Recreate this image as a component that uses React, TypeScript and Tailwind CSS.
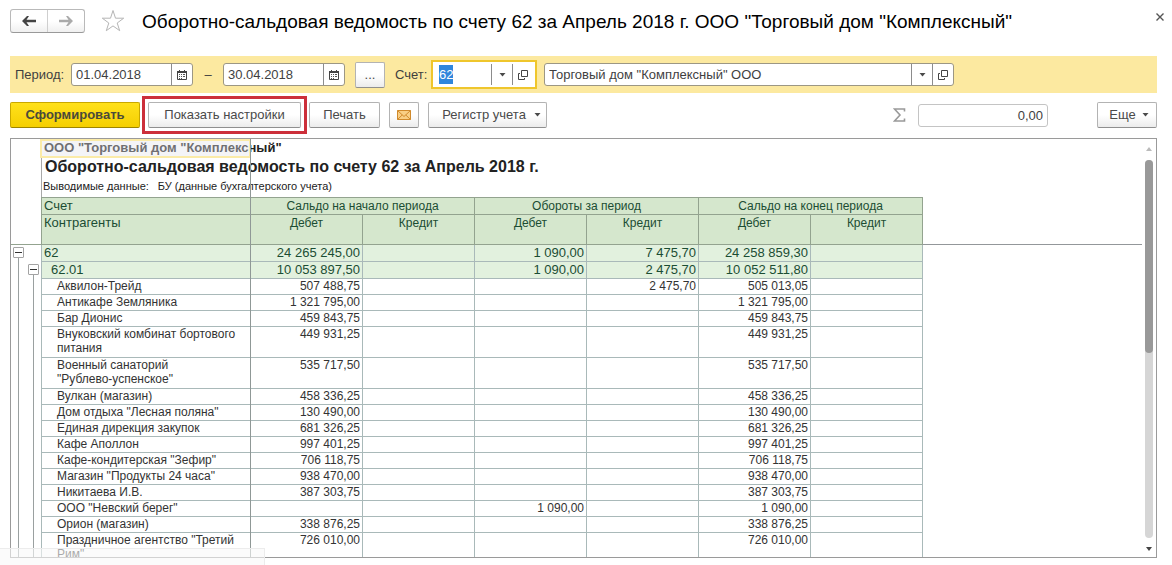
import { useEffect, useRef } from "react";
import type { ReactNode } from "react";

type Row = { name: string; open?: string; debit?: string; credit?: string; close?: string; level?: number };

const rows: Row[] = [
  { name: "62", open: "24 265 245,00", debit: "1 090,00", credit: "7 475,70", close: "24 258 859,30", level: 1 },
  { name: "62.01", open: "10 053 897,50", debit: "1 090,00", credit: "2 475,70", close: "10 052 511,80", level: 2 },
  { name: "Аквилон-Трейд", open: "507 488,75", credit: "2 475,70", close: "505 013,05" },
  { name: "Антикафе Земляника", open: "1 321 795,00", close: "1 321 795,00" },
  { name: "Бар Дионис", open: "459 843,75", close: "459 843,75" },
  { name: "Внуковский комбинат бортового питания", open: "449 931,25", close: "449 931,25" },
  { name: "Военный санаторий\n\"Рублево-успенское\"", open: "535 717,50", close: "535 717,50" },
  { name: "Вулкан (магазин)", open: "458 336,25", close: "458 336,25" },
  { name: "Дом отдыха \"Лесная поляна\"", open: "130 490,00", close: "130 490,00" },
  { name: "Единая дирекция закупок", open: "681 326,25", close: "681 326,25" },
  { name: "Кафе Аполлон", open: "997 401,25", close: "997 401,25" },
  { name: "Кафе-кондитерская \"Зефир\"", open: "706 118,75", close: "706 118,75" },
  { name: "Магазин \"Продукты 24 часа\"", open: "938 470,00", close: "938 470,00" },
  { name: "Никитаева И.В.", open: "387 303,75", close: "387 303,75" },
  { name: "ООО \"Невский берег\"", debit: "1 090,00", close: "1 090,00" },
  { name: "Орион (магазин)", open: "338 876,25", close: "338 876,25" },
  { name: "Праздничное агентство \"Третий Рим\"", open: "726 010,00", close: "726 010,00" },
];

const buttonBase =
  "flex h-[26px] items-center justify-center rounded-[2px] border border-[#b3b3b3] border-b-[#8f8f8f] bg-linear-to-b from-white from-50% to-[#ececec] text-[#4a4a4a] whitespace-nowrap";

function Caret() {
  return (
    <svg width="7" height="4" viewBox="0 0 7 4" aria-hidden="true">
      <path d="M0.5 0h6L3.5 3.6z" fill="#4a4a4a" />
    </svg>
  );
}

function OpenIcon() {
  return (
    <svg width="10" height="10" viewBox="0 0 10 10" fill="none" stroke="#444" aria-hidden="true">
      <path d="M3.5 0.5h6v6h-6zM2 3.5H0.5v6h6V8" />
    </svg>
  );
}

function CalendarIcon() {
  return (
    <svg width="10" height="10" viewBox="0 0 10 10" aria-hidden="true">
      <path d="M0.5 1.5h9v8h-9z" fill="none" stroke="#444" />
      <path d="M0 1h10v2H0zM2 0h1v2H2zM7 0h1v2H7z" fill="#444" />
      <path d="M2 4h1v1H2zM4 4h1v1H4zM6 4h2v1H6zM2 6h1v1H2zM4 6h1v1H4zM6 6h2v1H6zM2 8h1v1H2zM4 8h1v1H4z" fill="#555" />
    </svg>
  );
}

function FieldButton({ label, children }: { label: string; children: ReactNode }) {
  return (
    <button type="button" aria-label={label} className="flex w-[21px] shrink-0 items-center justify-center border-l border-[#8c8c8c]">
      {children}
    </button>
  );
}

function DateField({ label, value }: { label: string; value: string }) {
  return (
    <div className="flex h-[23px] w-[122px] shrink-0 overflow-hidden rounded-[3px] border border-[#9c9784] bg-white">
      <input aria-label={label} defaultValue={value} className="min-w-0 flex-1 bg-transparent pl-1 outline-none" />
      <FieldButton label={`${label}: календарь`}>
        <CalendarIcon />
      </FieldButton>
    </div>
  );
}

function AccountField() {
  const ref = useRef<HTMLInputElement>(null);
  useEffect(() => {
    ref.current?.focus();
    ref.current?.select();
  }, []);
  return (
    <div className="flex h-[29px] w-[106px] shrink-0 border-2 border-[#efc62c] bg-white p-[2px]">
      <input
        id="account"
        ref={ref}
        defaultValue="62"
        className="min-w-0 flex-1 bg-transparent pl-[4px] outline-none selection:bg-[#2f86dc] selection:text-white"
      />
      <FieldButton label="Выбрать счет">
        <Caret />
      </FieldButton>
      <FieldButton label="Открыть счет">
        <OpenIcon />
      </FieldButton>
    </div>
  );
}

function TreeCell({ level }: { level?: number }) {
  return (
    <td className="relative border-r border-[#a9b9b9] p-0">
      <span className={`absolute bottom-0 left-[7px] w-px bg-[#9aa0a0] ${level === 1 ? "top-3" : "top-0"}`} />
      {level !== 1 && <span className={`absolute bottom-0 left-[22px] w-px bg-[#9aa0a0] ${level === 2 ? "top-3" : "top-0"}`} />}
      {level && (
        <button
          type="button"
          aria-label="Свернуть группу"
          className={`absolute top-[2px] flex size-[11px] items-center justify-center rounded-[1px] border border-[#a3a3a3] bg-white ${
            level === 1 ? "left-[2px]" : "left-[17px]"
          }`}
        >
          <span className="h-px w-[7px] bg-[#333]" />
        </button>
      )}
    </td>
  );
}

function ReportTable() {
  const head = "border-b border-r border-[#93a38f] bg-[#d5e7cd] px-[2px] py-0 align-top font-normal leading-4";
  return (
    <table className="w-full table-fixed border-separate border-spacing-0 text-xs text-[#333]">
      <colgroup>
        <col className="w-[31px]" />
        <col className="w-[209px]" />
        <col className="w-[112px]" />
        <col className="w-[112px]" />
        <col className="w-[112px]" />
        <col className="w-[112px]" />
        <col className="w-[112px]" />
        <col className="w-[112px]" />
        <col />
      </colgroup>
      <thead className="text-[#1b4d33]">
        <tr className="h-[18px]">
          <td className="border-r border-[#93a38f] p-0" />
          <th scope="col" className={`${head} border-t text-left text-[13px]`}>Счет</th>
          <th scope="colgroup" colSpan={2} className={`${head} border-t`}>Сальдо на начало периода</th>
          <th scope="colgroup" colSpan={2} className={`${head} border-t`}>Обороты за период</th>
          <th scope="colgroup" colSpan={2} className={`${head} border-t`}>Сальдо на конец периода</th>
          <td className="p-0" />
        </tr>
        <tr className="h-[30px]">
          <td className="border-r border-b border-[#93a38f] p-0" />
          <th scope="col" className={`${head} text-left text-[13px]`}>Контрагенты</th>
          {["Дебет", "Кредит", "Дебет", "Кредит", "Дебет", "Кредит"].map((t, i) => (
            <th scope="col" key={i} className={head}>{t}</th>
          ))}
          <td className="border-b border-[#93979a] p-0" />
        </tr>
      </thead>
      <tbody>
        {rows.map((r) => {
          const cell = `border-b border-r border-[#a9b9b9] py-0 align-top ${r.level ? "bg-[#e2f1de] text-[13px] text-[#1b4d33]" : ""}`;
          const long = r.name.length > 30;
          const leading = r.level ? "leading-4" : "leading-[15px]";
          const indent = r.level === 1 ? "pl-[2px]" : r.level === 2 ? "pl-[9px]" : "pl-[15px]";
          return (
            <tr key={r.name}>
              <TreeCell level={r.level} />
              <th
                scope="row"
                className={`${cell} ${indent} pr-1 text-left font-normal whitespace-pre-line ${long ? "pb-[2px] leading-[14px]" : leading}`}
              >
                {r.name}
              </th>
              {[r.open, "", r.debit, r.credit, r.close, ""].map((v, i) => (
                <td key={i} className={`${cell} ${leading} pr-[2px] text-right`}>{v}</td>
              ))}
              <td className="p-0" />
            </tr>
          );
        })}
      </tbody>
    </table>
  );
}

export default function App() {
  return (
    <div className="relative flex h-screen flex-col overflow-hidden bg-white pr-[15px] pb-[7px] pl-[10px] font-['Liberation_Sans',Arial,sans-serif] text-[13px] text-[#3f3f3f] *:shrink-0">
      <header className="-mr-[11px] flex h-14 items-start pt-[9px]">
        <div className="flex h-6 w-[75px] rounded-[3px] border border-[#b9b9b9] border-b-[#999] bg-linear-to-b from-white from-50% to-[#f0f0f0]">
          <button type="button" aria-label="Назад" className="flex flex-1 items-center justify-center border-r border-[#cfcfcf]">
            <svg width="14" height="10" viewBox="0 0 14 10" fill="#444" aria-hidden="true">
              <path d="M0 5L5 0h2L4.500 3.700H14v2.600H4.500L7 10H5z" />
            </svg>
          </button>
          <button type="button" aria-label="Вперед" className="flex flex-1 items-center justify-center">
            <svg width="14" height="10" viewBox="0 0 14 10" fill="#aaa" aria-hidden="true">
              <path d="M14 5L9 0H7l2.500 3.700H0v2.600h9.500L7 10h2z" />
            </svg>
          </button>
        </div>
        <button type="button" aria-label="В избранное" className="ml-4 h-6">
          <svg width="24" height="24" viewBox="0 0 24 24" fill="none" stroke="#b5b5b5" aria-hidden="true">
            <path d="M12 1.500l2.500 7.700h8.200l-6.500 4.800 2.500 7.700-6.700-4.800-6.700 4.800 2.500-7.700L1.300 9.200h8.200z" />
          </svg>
        </button>
        <h1 className="ml-[17px] flex-1 truncate text-[19px] leading-[26px] text-black">
          Оборотно-сальдовая ведомость по счету 62 за Апрель 2018 г. ООО "Торговый дом "Комплексный"
        </h1>
        <button type="button" aria-label="Закрыть" className="p-1">
          <svg width="8" height="8" viewBox="0 0 8 8" stroke="#555" strokeWidth="1.4" aria-hidden="true">
            <path d="M0.5 0.5l7 7M7.5 0.5l-7 7" />
          </svg>
        </button>
      </header>

      <div className="flex h-[37px] items-center bg-[#fce9a0] pl-[5px]">
        <span className="w-14 shrink-0">Период:</span>
        <DateField label="Начало периода" value="01.04.2018" />
        <span className="w-[30px] shrink-0 text-center">–</span>
        <DateField label="Конец периода" value="30.04.2018" />
        <button type="button" aria-label="Выбрать период" className={`${buttonBase} ml-[10px] w-[30px] shrink-0`}>...</button>
        <label htmlFor="account" className="ml-[10px] w-9 shrink-0">Счет:</label>
        <AccountField />
        <div className="ml-[7px] flex h-[23px] w-[410px] overflow-hidden rounded-[3px] border border-[#9c9784] bg-white">
          <input aria-label="Организация" defaultValue={'Торговый дом "Комплексный" ООО'} className="min-w-0 flex-1 bg-transparent pl-1 outline-none" />
          <FieldButton label="Выбрать организацию">
            <Caret />
          </FieldButton>
          <FieldButton label="Открыть организацию">
            <OpenIcon />
          </FieldButton>
        </div>
      </div>

      <div className="mt-[3px] flex h-[38px] items-center">
        <button
          type="button"
          className="h-[26px] w-[130px] rounded-[2px] border border-[#c9a800] border-b-[#9d8400] bg-linear-to-b from-[#ffe11a] to-[#f5cf00] font-bold text-[#4a4a3a]"
        >
          Сформировать
        </button>
        <div className="mx-[2px] border-3 border-[#cc2f3a] p-[3px]">
          <button type="button" className={`${buttonBase} w-[153px]`}>Показать настройки</button>
        </div>
        <button type="button" className={`${buttonBase} w-[71px]`}>Печать</button>
        <button type="button" aria-label="Отправить по почте" className={`${buttonBase} ml-[9px] w-[30px]`}>
          <svg width="14" height="10" viewBox="0 0 14 10" aria-hidden="true">
            <path d="M0.5 0.5h13v9H0.5z" fill="#f9cf85" stroke="#d08a2c" />
            <path d="M0.5 9.5L5.2 5M13.5 9.5L8.8 5M0.5 0.5L7 6.5l6.5-6" fill="none" stroke="#d08a2c" />
          </svg>
        </button>
        <button type="button" className={`${buttonBase} ml-[9px] w-[119px] gap-2 pl-2`}>
          Регистр учета <Caret />
        </button>
        <label htmlFor="sum" className="ml-auto" aria-label="Сумма">
          <svg width="13" height="14" viewBox="0 0 13 14" fill="none" stroke="#999" strokeWidth="1.6" aria-hidden="true">
            <path d="M11.5 3.5V1H1.5L7 7l-5.500 6h10v-2.500" />
          </svg>
        </label>
        <input id="sum" readOnly value="0,00" className="ml-3 h-[23px] w-[130px] rounded-[3px] border border-[#c4c4c4] pr-1 text-right outline-none" />
        <button type="button" className={`${buttonBase} ml-[49px] w-[60px] gap-[6px] pl-1`}>
          Еще <Caret />
        </button>
      </div>

      <main className="relative mt-1 flex min-h-0 flex-1 shrink! overflow-hidden border border-[#9a9a9a]">
        <div className="min-w-0 flex-1 overflow-hidden">
          <div className="relative flex h-[58px] flex-col pl-[30px] whitespace-nowrap text-[#222]">
            <p className="pl-[3px] text-[13px] leading-[18px] font-bold">ООО "Торговый дом "Комплексный"</p>
            <h2 className="border-l border-[#a9a9a9] pl-[3px] text-base leading-5 font-bold">
              Оборотно-сальдовая ведомость по счету 62 за Апрель 2018 г.
            </h2>
            <p className="flex-1 border-l border-[#a9a9a9] pl-[1px] text-[11px] leading-[18px]">
              <span>Выводимые данные:</span>
              <span className="ml-[9px]">БУ (данные бухгалтерского учета)</span>
            </p>
            <span className="absolute top-0 left-[29px] h-[19px] w-[211px] border-2 border-[#fbeba8] bg-[#e4e4ea]/40" />
          </div>
          <ReportTable />
        </div>
        <span className="absolute inset-y-0 left-[239px] w-px bg-[#8f9896]" />
        <div className="ml-[2px] flex w-3 shrink-0 flex-col items-center pt-[8px] pr-[2px] pb-[6px]" aria-hidden="true">
          <svg width="6" height="4" viewBox="0 0 6 4">
            <path d="M0 4h6L3 0z" fill="#bbb" />
          </svg>
          <div className="my-[9px] w-2 flex-1 rounded-full bg-[#d6d6d6]">
            <div className="h-[51%] rounded-full bg-[#999]" />
          </div>
          <svg width="6" height="4" viewBox="0 0 6 4">
            <path d="M0 0h6L3 4z" fill="#444" />
          </svg>
        </div>
      </main>

      <div className="absolute bottom-0 left-0 h-[17px] w-[265px] border-t border-r border-[#ececec] bg-[#f8f8f8]/60" />
    </div>
  );
}
